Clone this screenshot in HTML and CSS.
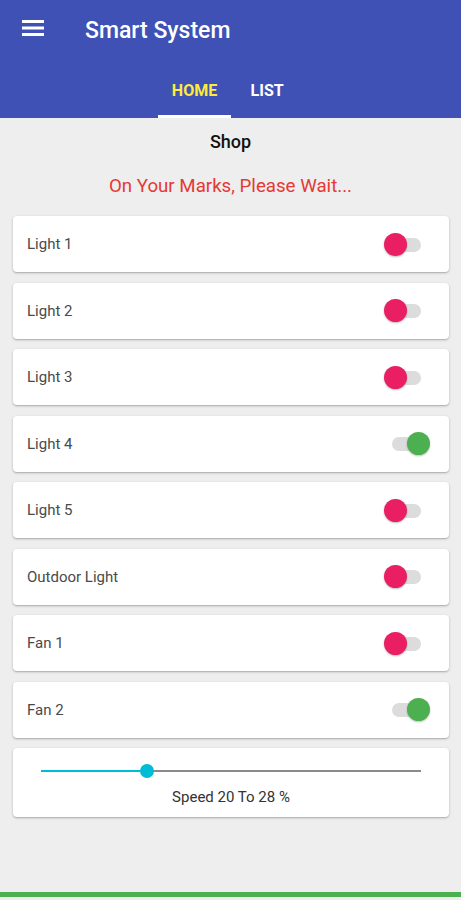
FILE: index.html
```html
<!DOCTYPE html>
<html lang="en">
  <head>
    <meta charset="UTF-8" />
    <meta name="viewport" content="width=device-width, initial-scale=1.0" />
    <title>Smart System</title>
    <link rel="stylesheet" href="styles.css">
  </head>
  <body>
    <header class="appbar">
      <div class="toolbar">
        <svg class="menu" width="24" height="18" viewBox="0 0 24 18">
          <rect x="1" y="1" width="22" height="3" fill="#fff" />
          <rect x="1" y="7.5" width="22" height="3" fill="#fff" />
          <rect x="1" y="14" width="22" height="3" fill="#fff" />
        </svg>
        <h1 class="title">Smart System</h1>
      </div>
      <nav class="tabs">
        <div class="tab active">HOME</div>
        <div class="tab">LIST</div>
      </nav>
    </header>

    <main class="content">
      <h2 class="place">Shop</h2>
      <p class="status">On Your Marks, Please Wait...</p>

      <div class="list">
        <div class="card">
          <span class="label">Light 1</span>
          <div class="switch"><span class="track"></span><span class="thumb"></span></div>
        </div>
        <div class="card">
          <span class="label">Light 2</span>
          <div class="switch"><span class="track"></span><span class="thumb"></span></div>
        </div>
        <div class="card">
          <span class="label">Light 3</span>
          <div class="switch"><span class="track"></span><span class="thumb"></span></div>
        </div>
        <div class="card">
          <span class="label">Light 4</span>
          <div class="switch on"><span class="track"></span><span class="thumb"></span></div>
        </div>
        <div class="card">
          <span class="label">Light 5</span>
          <div class="switch"><span class="track"></span><span class="thumb"></span></div>
        </div>
        <div class="card">
          <span class="label">Outdoor Light</span>
          <div class="switch"><span class="track"></span><span class="thumb"></span></div>
        </div>
        <div class="card">
          <span class="label">Fan 1</span>
          <div class="switch"><span class="track"></span><span class="thumb"></span></div>
        </div>
        <div class="card">
          <span class="label">Fan 2</span>
          <div class="switch on"><span class="track"></span><span class="thumb"></span></div>
        </div>

        <div class="card speed">
          <div class="slider">
            <span class="fill" style="width: 28%"></span>
            <span class="knob"></span>
          </div>
          <div class="speed-text">Speed 20 To 28 %</div>
        </div>
      </div>
    </main>

    <div class="bottom-line"></div>
  </body>
</html>
```

FILE: styles.css
```css
* {
  box-sizing: border-box;
}
body {
  margin: 0;
  width: 461px;
  height: 900px;
  font-family: Roboto, "Noto Sans", Arial, sans-serif;
  background: #eeeeee;
  display: flex;
  flex-direction: column;
  overflow: hidden;
}
.appbar {
  background: #3f51b5;
  color: white;
}
.toolbar {
  height: 62px;
  display: flex;
  align-items: center;
  padding-left: 21px;
}
.menu {
  margin-top: -6px;
}
.title {
  margin: -2px 0 0 40px;
  font-size: 23px;
  font-weight: 500;
}
.tabs {
  height: 56px;
  display: flex;
  justify-content: center;
}
.tab {
  min-width: 72px;
  padding: 3px 14px 0;
  display: flex;
  align-items: center;
  justify-content: center;
  font-size: 16px;
  font-weight: 700;
  color: white;
  border-bottom: 3px solid transparent;
}
.tab.active {
  color: #ffeb3b;
  border-bottom-color: white;
}
.content {
  flex: 1;
}
.place {
  margin: 13px 0 0;
  text-align: center;
  font-size: 18px;
  font-weight: 500;
  color: #111;
}
.status {
  margin: 23px 0 0;
  text-align: center;
  font-size: 18.7px;
  color: #e53935;
}
.list {
  margin: 19px 12px 0 13px;
  display: flex;
  flex-direction: column;
  gap: 10.5px;
}
.card {
  height: 56px;
  background: white;
  border-radius: 4px;
  box-shadow: 0 1px 3px rgba(0, 0, 0, 0.2), 0 1px 1px rgba(0, 0, 0, 0.12);
  display: flex;
  align-items: center;
  justify-content: space-between;
  padding: 0 18px 0 14px;
}
.label {
  font-size: 15px;
  color: #4a4a4a;
}
.switch {
  position: relative;
  width: 47px;
  height: 23px;
}
.track {
  position: absolute;
  left: 8px;
  top: 5px;
  width: 29px;
  height: 14px;
  border-radius: 7px;
  background: #dcdcdc;
}
.thumb {
  position: absolute;
  left: 0;
  top: 0;
  width: 23px;
  height: 23px;
  border-radius: 50%;
  background: #e91e63;
  box-shadow: 0 1px 2px rgba(0, 0, 0, 0.25);
}
.switch.on .thumb {
  left: 23px;
  background: #4caf50;
}
.card.speed {
  height: 69px;
  flex-direction: column;
  align-items: stretch;
  justify-content: flex-start;
  padding: 22px 28px 0 28px;
}
.slider {
  position: relative;
  height: 2px;
  background: #8a8a8a;
}
.fill {
  position: absolute;
  left: 0;
  top: 0;
  height: 2px;
  background: #00bcd4;
}
.knob {
  position: absolute;
  left: 28%;
  top: -6px;
  width: 14px;
  height: 14px;
  margin-left: -7px;
  border-radius: 50%;
  background: #00bcd4;
}
.speed-text {
  margin-top: 16px;
  text-align: center;
  font-size: 15px;
  color: #333;
}
.bottom-line {
  height: 5px;
  background: #4caf50;
  margin-bottom: 3px;
}
```
